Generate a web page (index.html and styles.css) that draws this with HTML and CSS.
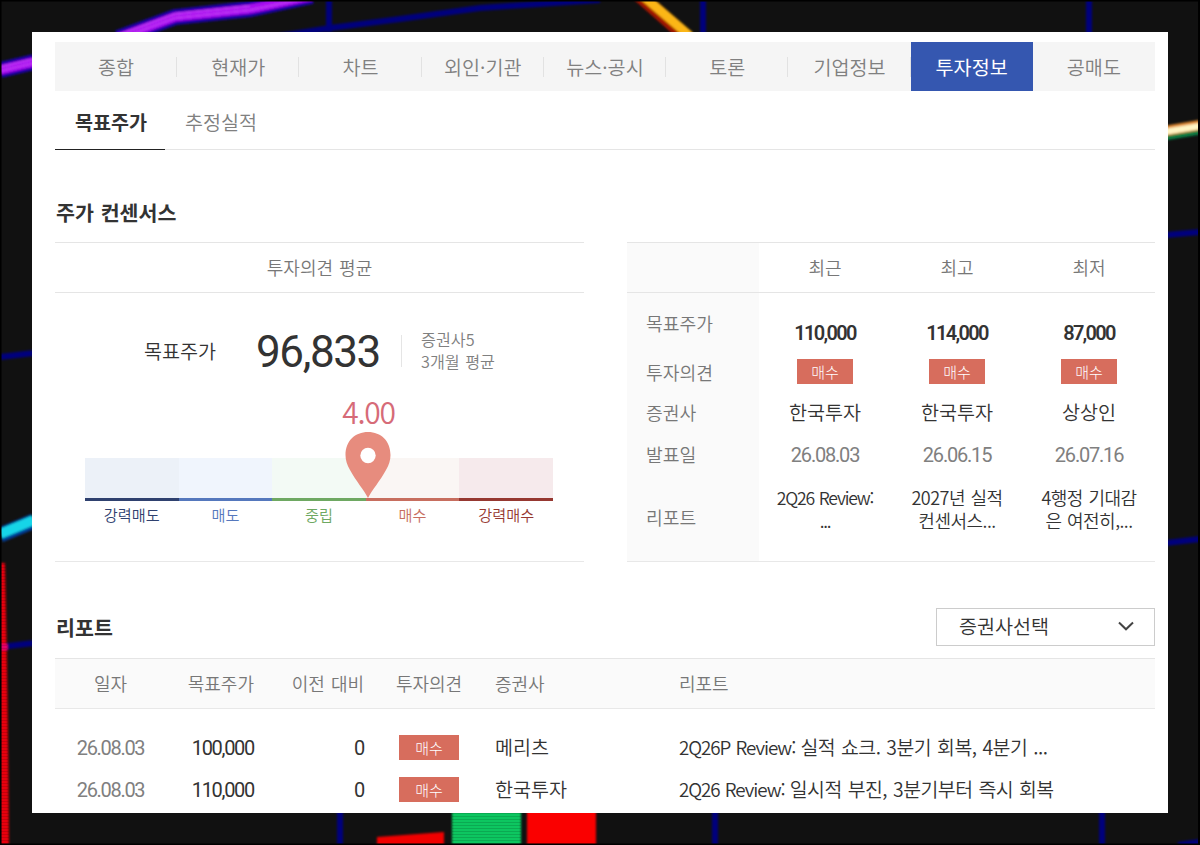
FILE: index.html
```html
<!DOCTYPE html>
<html lang="ko">
<head>
    <meta charset="UTF-8">
    <meta name="viewport" content="width=device-width, initial-scale=1.0">
    <title>투자정보 - 목표주가</title>
    <link rel="stylesheet" href="styles.css">
</head>
<body>

<!-- Chart backdrop -->
<svg class="backdrop" viewBox="0 0 1200 845" aria-hidden="true">
    <defs>
        <pattern id="scan" width="6" height="3" patternUnits="userSpaceOnUse">
            <path d="M0 .5H6" stroke="#000" stroke-opacity=".14"/>
        </pattern>
        <filter id="soft"><feGaussianBlur stdDeviation="0.9"/></filter>
    </defs>
    <rect width="1200" height="845" fill="#111"/>
    <g fill="none" stroke="#00007c" stroke-width="6" filter="url(#soft)">
        <path d="M280 36 330 28 400 19 480 8 600 0M329 0V32M703 0V34M1089 0V34"/>
        <path d="M0 357 34 353M1166 235 1200 232M1166 543 1200 539M0 647 34 643"/>
        <path d="M340 811V845M715 811V845M1102 811V845M1178 845 1200 842"/>
    </g>
    <g fill="none" filter="url(#soft)">
        <path d="M0 70 34 62M118 38 175 17 250 9 312-4" stroke="#1b00a8" stroke-width="16"/>
        <path d="M0 70 34 62M118 38 175 17 250 9 312-4" stroke="#a90af0" stroke-width="9"/>
        <path d="M0 71 34 63M118 39 175 18 250 10 312-3M0 67 34 59M118 35 175 14 250 6" stroke="#d050f5" stroke-width="1"/>
        <path d="M638-6 688 38" stroke="#a01800" stroke-width="14"/>
        <path d="M641-6 690 36" stroke="#fbb614" stroke-width="9"/>
        <path d="M1164 136 1200 130" stroke="#087c43" stroke-width="9"/>
        <path d="M1164 131 1200 125" stroke="#e08a31" stroke-width="10"/>
        <path d="M1164 132 1200 126" stroke="#fff5c4" stroke-width="6"/>
        <path d="M0 535 34 521" stroke="#003c98" stroke-width="15"/>
        <path d="M0 534 34 520" stroke="#15d5e8" stroke-width="10"/>
    </g>
    <g filter="url(#soft)">
        <path d="M0 563H5Q8 700 9 845H0Z" fill="#e80007"/>
        <path d="M0 644H8V650H0Z" fill="#e80068"/>
        <path d="M377 837 444 832V845H377Z" fill="#f00000"/>
        <path d="M452 808H521V845H452Z" fill="#08c660"/>
        <path d="M527 808H596V845H527Z" fill="#fa0000"/>
    </g>
    <path d="M452 813H521V845H452ZM0 563H6L9 845H0Z" fill="url(#scan)"/>
    <path d="M.5 0V845M0 .5H1200M1199 0V845M0 844.5H1200" stroke="#000" stroke-width="2"/>
</svg>

<main class="panel">
    <nav class="tabs">
        <a>종합</a>
        <a>현재가</a>
        <a>차트</a>
        <a>외인·기관</a>
        <a>뉴스·공시</a>
        <a>토론</a>
        <a>기업정보</a>
        <a class="active">투자정보</a>
        <a>공매도</a>
    </nav>

    <nav class="sub-tabs">
        <a class="active">목표주가</a>
        <a>추정실적</a>
    </nav>

    <!-- Consensus -->
    <h2 class="consensus-title">주가 컨센서스</h2>
    <section class="consensus">
        <div class="opinion">
            <div class="opinion-head">투자의견 평균</div>
            <div class="target">
                <span class="target-label">목표주가</span>
                <strong class="target-price">96,833</strong>
                <span class="target-note">증권사5<br>3개월 평균</span>
            </div>
            <div class="scale">
                <div class="step strong-sell"><i></i><span>강력매도</span></div>
                <div class="step sell"><i></i><span>매도</span></div>
                <div class="step hold"><i></i><span>중립</span></div>
                <div class="step buy"><i></i><span>매수</span></div>
                <div class="step strong-buy"><i></i><span>강력매수</span></div>
                <div class="marker">
                    <b>4.00</b>
                    <svg width="46" height="68" viewBox="0 0 46 68">
                        <path d="M23 67C19 59 11 50 5 39C2 34 .5 29 .5 24C.5 10 10 1 23 1S45.500 10 45.500 24C45.500 29 44 34 41 39C35 50 27 59 23 67Z" fill="#e78c7e"/>
                        <circle cx="23" cy="24.500" r="7.700" fill="#fff"/>
                    </svg>
                </div>
            </div>
        </div>

        <div class="summary">
            <div class="row head"><span class="label"></span><span>최근</span><span>최고</span><span>최저</span></div>
            <div class="row price"><span class="label">목표주가</span><b>110,000</b><b>114,000</b><b>87,000</b></div>
            <div class="row rating"><span class="label">투자의견</span><span><em class="badge">매수</em></span><span><em class="badge">매수</em></span><span><em class="badge">매수</em></span></div>
            <div class="row broker"><span class="label">증권사</span><span>한국투자</span><span>한국투자</span><span>상상인</span></div>
            <div class="row date"><span class="label">발표일</span><span>26.08.03</span><span>26.06.15</span><span>26.07.16</span></div>
            <div class="row report"><span class="label">리포트</span><span class="latin">2Q26 Review:<br>...</span><span>2027년 실적<br>컨센서스...</span><span>4행정 기대감<br>은 여전히,...</span></div>
        </div>
    </section>

    <!-- Reports -->
    <div class="reports-bar">
        <h2>리포트</h2>
        <button class="select" type="button">
            증권사선택
            <svg width="16" height="10" viewBox="0 0 16 10"><path d="M1 1.500 8 8.300 15 1.500" fill="none" stroke="#444" stroke-width="2"/></svg>
        </button>
    </div>
    <section class="reports">
        <div class="line head">
            <span class="day">일자</span><span class="num">목표주가</span><span class="num">이전 대비</span>
            <span class="rate">투자의견</span><span>증권사</span><span>리포트</span>
        </div>
        <div class="line">
            <span class="day">26.08.03</span><span class="num">100,000</span><span class="num">0</span>
            <span class="rate"><em class="badge">매수</em></span><span class="firm">메리츠</span><span class="title"><span class="latin">2Q26P Review: </span>실적 쇼크. 3분기 회복, 4분기 ...</span>
        </div>
        <div class="line">
            <span class="day">26.08.03</span><span class="num">110,000</span><span class="num">0</span>
            <span class="rate"><em class="badge">매수</em></span><span class="firm">한국투자</span><span class="title"><span class="latin">2Q26 Review: </span>일시적 부진, 3분기부터 즉시 회복</span>
        </div>
    </section>
</main>

</body>
</html>
```
FILE: styles.css
```css
* {
    box-sizing: border-box;
}

body {
    margin: 0;
    height: 845px;
    padding: 32px;
    overflow: hidden;
    background: #111;
    color: #333;
    font-family: "Noto Sans CJK KR", sans-serif;
    font-size: 19.6px;
    font-weight: 350;
    line-height: 24px;
    word-spacing: 1px;
}

h2 {
    margin: 0;
    font-size: 20.6px;
    font-weight: 700;
    line-height: 28px;
}

em {
    font-style: normal;
}

.backdrop {
    position: absolute;
    top: 0;
    left: 0;
    width: 1200px;
    height: 845px;
}

.panel {
    position: relative;
    height: 781px;
    padding: 10px 13px 0 23px;
    background: #fff;
}

/* Tabs */
.tabs {
    display: grid;
    grid-template-columns: repeat(9, 1fr);
    height: 49px;
    background: #f5f5f5;
    color: #808080;
}

.tabs a {
    display: flex;
    align-items: center;
    justify-content: center;
    background: linear-gradient(#e2e2e2, #e2e2e2) right center / 1px 20px no-repeat;
}

.tabs a:last-child {
    background: none;
}

.tabs .active {
    background: #3557b0;
    color: #fff;
    font-weight: 400;
}

.sub-tabs {
    display: flex;
    height: 59px;
    border-bottom: 1px solid #e5e5e5;
    color: #808080;
}

.sub-tabs a {
    padding: 19px 20px 0;
    height: 59px;
}

.sub-tabs .active {
    width: 110px;
    padding-right: 0;
    border-bottom: 1px solid #222;
    color: #333;
    font-weight: 700;
}

/* Consensus */
.consensus-title {
    margin: 48px 0 0 1px;
    height: 44px;
}

.consensus {
    display: grid;
    grid-template-columns: 529px 528px;
    justify-content: space-between;
    height: 320px;
}

.opinion,
.summary {
    border-top: 1px solid #e5e5e5;
    border-bottom: 1px solid #e8e8e8;
}

.opinion-head {
    height: 50px;
    padding-top: 12px;
    border-bottom: 1px solid #e5e5e5;
    color: #777;
    font-size: 18px;
    text-align: center;
}

.target {
    display: flex;
    align-items: center;
    height: 116px;
    padding-left: 89px;
}

.target-label {
    width: 112px;
}

.target-price {
    width: 145px;
    padding-top: 1px;
    font-family: Roboto, sans-serif;
    font-size: 44px;
    font-weight: 400;
    letter-spacing: -1.4px;
}

.target-note {
    padding-left: 20px;
    padding-bottom: 3px;
    background: linear-gradient(#e5e5e5, #e5e5e5) left center / 1px 32px no-repeat;
    color: #808080;
    font-size: 16.2px;
    line-height: 22px;
}

.scale {
    position: relative;
    display: grid;
    grid-template-columns: repeat(5, 1fr);
    width: 468px;
    margin: 49px 0 0 30px;
}

.step {
    font-size: 15.2px;
    text-align: center;
}

.step i {
    display: block;
    height: 43px;
    margin-bottom: 1px;
    border-bottom: 3px solid;
}

.strong-sell { color: #2f416f; }
.strong-sell i { background: #ecf1f8; }
.sell { color: #5578bd; }
.sell i { background: #f0f5fd; }
.hold { color: #6ea862; }
.hold i { background: #f3faf5; }
.buy { color: #c76e5f; }
.buy i { background: #faf6f4; }
.strong-buy { color: #963831; }
.strong-buy i { background: #f6eaec; }

/* Score pin over the scale */
.marker {
    position: absolute;
    left: 253px;
    top: -64px;
    display: flex;
    flex-direction: column;
    align-items: center;
    width: 60px;
    color: #d66b78;
}

.marker b {
    margin-bottom: 3px;
    padding-left: 1px;
    font-size: 30px;
    font-weight: 350;
    letter-spacing: -1.3px;
    line-height: 34px;
}

/* Recent, highest and lowest targets */
.summary {
    display: grid;
    grid-template-rows: 50px 58px 41px 41px 42px 1fr;
}

.row {
    display: grid;
    grid-template-columns: repeat(4, 1fr);
    text-align: center;
}

.row > * {
    display: flex;
    align-items: center;
    justify-content: center;
}

.row .label {
    justify-content: flex-start;
    padding-left: 19px;
    background: #fafafa;
    color: #777;
    font-size: 18.2px;
}

.row.head {
    border-bottom: 1px solid #e5e5e5;
    color: #777;
    font-size: 18px;
}

.row.head > span:not(.label) {
    padding-bottom: 2px;
}

.price b {
    padding-top: 22px;
    font-family: Roboto, sans-serif;
    font-size: 20px;
    font-weight: 600;
    letter-spacing: -1.7px;
}

.price .label {
    padding-top: 2px;
}

.broker > * {
    padding-bottom: 2px;
}

.date > span:not(.label) {
    padding-top: 1px;
    color: #808080;
    font-family: Roboto, sans-serif;
    font-weight: 400;
    font-size: 20px;
    letter-spacing: -1.2px;
}

.report > span:not(.label) {
    align-items: flex-start;
    padding-top: 11px;
    font-size: 18px;
    line-height: 23px;
    letter-spacing: -0.5px;
}

.report > .latin:not(.label) {
    font-size: 17.6px;
    letter-spacing: -1.2px;
}

.report .label {
    padding-bottom: 2px;
}

.badge {
    display: flex;
    align-items: center;
    justify-content: center;
    width: 56px;
    height: 25px;
    background: #d76d5d;
    color: #fff;
    font-size: 15px;
    font-weight: 300;
}

/* Reports */
.reports-bar {
    display: flex;
    justify-content: space-between;
    margin-top: 46px;
    height: 50px;
}

.reports-bar h2 {
    padding: 5px 0 0 1px;
}

.select {
    display: flex;
    align-items: center;
    justify-content: space-between;
    width: 219px;
    height: 38px;
    padding: 0 20px 2px 22px;
    border: 1px solid #ccc;
    background: #fff;
    color: #333;
    font: inherit;
}

.line {
    display: grid;
    grid-template-columns: 111px 88px 110px 130px 185px 1fr;
    align-items: center;
    height: 42px;
}

.line.head {
    height: 51px;
    margin-bottom: 17px;
    padding-bottom: 2px;
    border-top: 1px solid #e5e5e5;
    border-bottom: 1px solid #e8e8e8;
    background: #fafafa;
    color: #777;
    font-size: 18px;
}

.day {
    text-align: center;
}

.num {
    text-align: right;
}

.line:not(.head) .day,
.line:not(.head) .num {
    padding-top: 1px;
    font-family: Roboto, sans-serif;
    font-size: 20px;
    font-weight: 400;
    letter-spacing: -1.3px;
}

.line:not(.head) .day {
    color: #808080;
}

.rate {
    display: flex;
    justify-content: center;
}

.rate .badge {
    width: 60px;
    padding-top: 1px;
}

.firm,
.line.head span:nth-child(5) {
    padding-left: 1px;
}

.title {
    font-size: 19.4px;
    letter-spacing: -0.5px;
    white-space: nowrap;
}

.title .latin {
    font-size: 18.8px;
    letter-spacing: -1.05px;
}
```
